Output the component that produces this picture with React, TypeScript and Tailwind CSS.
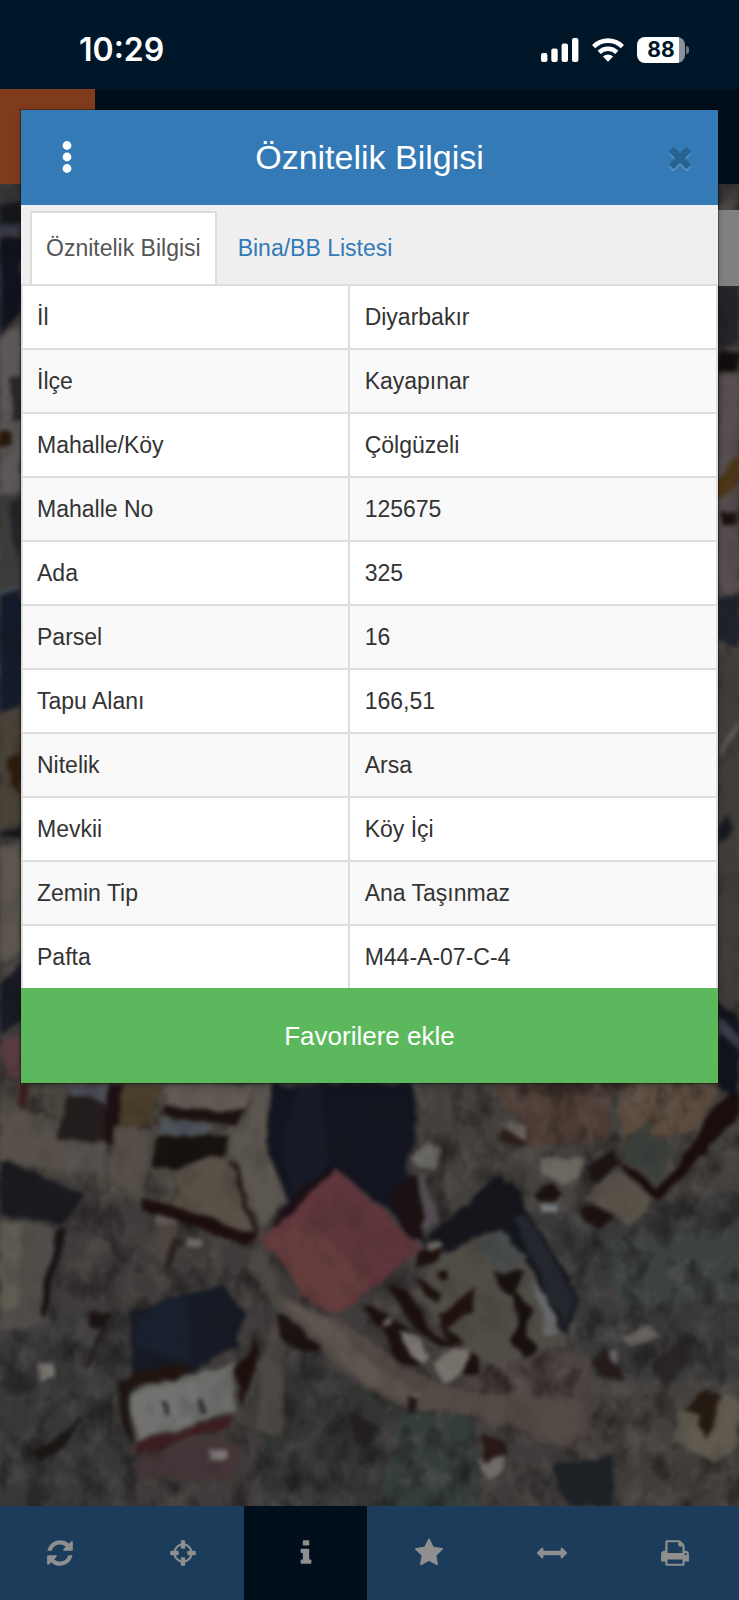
import React from "react";

const ICONS = {
  refresh:
    "M1639 1056q0 5-1 7-64 268-268 434.5t-478 166.5q-146 0-282.5-55t-243.5-157l-129 129q-19 19-45 19t-45-19-19-45v-448q0-26 19-45t45-19h448q26 0 45 19t19 45-19 45l-137 137q71 66 161 102t187 36q134 0 250-65t186-179q11-17 53-117 8-23 30-23h192q13 0 22.5 9.5t9.5 22.5zm25-800v448q0 26-19 45t-45 19h-448q-26 0-45-19t-19-45 19-45l138-138q-148-137-349-137-134 0-250 65t-186 179q-11 17-53 117-8 23-30 23h-199q-13 0-22.5-9.5t-9.5-22.5v-7q65-268 270-434.5t480-166.5q146 0 284 55.5t245 156.5l130-129q19-19 45-19t45 19 19 45z",
  crosshairs:
    "M1325 1024h-109q-26 0-45-19t-19-45v-128q0-26 19-45t45-19h109q-32-108-112.5-188.5t-188.5-112.5v109q0 26-19 45t-45 19h-128q-26 0-45-19t-19-45v-109q-108 32-188.5 112.5t-112.5 188.5h109q26 0 45 19t19 45v128q0 26-19 45t-45 19h-109q32 108 112.5 188.5t188.5 112.5v-109q0-26 19-45t45-19h128q26 0 45 19t19 45v109q108-32 188.5-112.5t112.5-188.5zm339-192v128q0 26-19 45t-45 19h-143q-37 161-154.5 278.5t-278.5 154.5v143q0 26-19 45t-45 19h-128q-26 0-45-19t-19-45v-143q-161-37-278.5-154.5t-154.5-278.5h-143q-26 0-45-19t-19-45v-128q0-26 19-45t45-19h143q37-161 154.5-278.5t278.5-154.5v-143q0-26 19-45t45-19h128q26 0 45 19t19 45v143q161 37 278.5 154.5t154.5 278.5h143q26 0 45 19t19 45z",
  info: "M1216 1344v128q0 26-19 45t-45 19h-512q-26 0-45-19t-19-45v-128q0-26 19-45t45-19h64v-384h-64q-26 0-45-19t-19-45v-128q0-26 19-45t45-19h384q26 0 45 19t19 45v576h64q26 0 45 19t19 45zm-128-1152v192q0 26-19 45t-45 19h-256q-26 0-45-19t-19-45v-192q0-26 19-45t45-19h256q26 0 45 19t19 45z",
  star: "M1728 647q0 22-26 48l-363 354 86 500q1 7 1 20 0 21-10.5 35.5t-30.5 14.5q-19 0-40-12l-449-236-449 236q-22 12-40 12-21 0-31.5-14.5t-10.5-35.5q0-6 2-20l86-500-364-354q-25-27-25-48 0-37 56-46l502-73 225-455q19-41 49-41t49 41l225 455 502 73q56 9 56 46z",
  measure:
    "M1792 896q0 26-19 45l-256 256q-19 19-45 19t-45-19-19-45v-128h-1024v128q0 26-19 45t-45 19-45-19l-256-256q-19-19-19-45t19-45l256-256q19-19 45-19t45 19 19 45v128h1024v-128q0-26 19-45t45-19 45 19l256 256q19 19 19 45z",
  print:
    "M448 1536h896v-256h-896v256zm0-640h896v-384h-160q-40 0-68-28t-28-68v-160h-640v640zm1152 64q0-26-19-45t-45-19-45 19-19 45 19 45 45 19 45-19 19-45zm128 0v416q0 13-9.5 22.5t-22.5 9.5h-224v160q0 40-28 68t-68 28h-960q-40 0-68-28t-28-68v-160h-224q-13 0-22.5-9.5t-9.5-22.5v-416q0-79 56.5-135.5t135.5-56.5h64v-544q0-40 28-68t68-28h672q40 0 88 20t76 48l152 152q28 28 48 76t20 88v256h64q79 0 135.5 56.5t56.5 135.5z",
  times:
    "M1490 1322q0 40-28 68l-136 136q-28 28-68 28t-68-28l-294-294-294 294q-28 28-68 28t-68-28l-136-136q-28-28-28-68t28-68l294-294-294-294q-28-28-28-68t28-68l136-136q28-28 68-28t68 28l294 294 294-294q28-28 68-28t68 28l136 136q28 28 28 68t-28 68l-294 294 294 294q28 28 28 68z",
};

type IconName = keyof typeof ICONS;

function Icon({ name, className }: { name: IconName; className: string }) {
  return (
    <svg viewBox="0 0 1792 1792" className={className} fill="currentColor" aria-hidden="true">
      <path d={ICONS[name]} />
    </svg>
  );
}

const ROWS: [string, string][] = [
  ["İl", "Diyarbakır"],
  ["İlçe", "Kayapınar"],
  ["Mahalle/Köy", "Çölgüzeli"],
  ["Mahalle No", "125675"],
  ["Ada", "325"],
  ["Parsel", "16"],
  ["Tapu Alanı", "166,51"],
  ["Nitelik", "Arsa"],
  ["Mevkii", "Köy İçi"],
  ["Zemin Tip", "Ana Taşınmaz"],
  ["Pafta", "M44-A-07-C-4"],
];

const TOOLS: { icon: IconName; label: string; active?: boolean }[] = [
  { icon: "refresh", label: "Yenile" },
  { icon: "crosshairs", label: "Konum" },
  { icon: "info", label: "Bilgi", active: true },
  { icon: "star", label: "Favoriler" },
  { icon: "measure", label: "Ölçüm" },
  { icon: "print", label: "Yazdır" },
];

/* Ground patches: [fill, polygon points] */
const GROUND: [string, string][] = [
  ["#4a453f", "0,0 580,0 560,480 300,360 0,240"],
  ["#43403d", "870,0 1568,0 1568,1290 1250,1290 1200,700 900,450"],
  ["#393939", "1130,400 1568,330 1568,900 1260,900"],
  ["#383738", "0,700 280,700 280,1290 0,1290"],
  ["#323432", "640,820 860,980 1010,1010 1020,1290 560,1290 560,1000"],
  ["#343d39", "850,1000 1000,1000 1020,1290 800,1290"],
  ["#403d39", "1300,1130 1568,1130 1568,1290 1300,1290"],
  ["#4b4241", "1000,780 1250,820 1240,1120 980,1000"],
  ["#4c3c34", "1040,0 1310,0 1290,180 1130,200"],
  ["#5a4a3d", "1310,0 1530,0 1480,150 1320,190"],
  ["#3c4240", "1290,480 1568,440 1568,640 1310,680"],
];

const SHAPES: [string, string][] = [
  // north-west roofs
  ["#57514a", "0,90 90,95 150,180 140,270 0,240"],
  ["#4b3f2c", "258,10 345,10 320,130 250,135"],
  ["#241d1d", "150,30 235,50 240,180 120,180"],
  ["#4d4e58", "140,10 235,10 235,70 160,40"],
  ["#1b1112", "232,10 258,10 250,190 225,185"],
  ["#3a1e1c", "40,10 64,10 52,85 38,70"],
  ["#625b54", "350,10 545,10 515,95 350,70"],
  ["#1b1111", "350,72 520,92 500,135 345,105"],
  ["#50545d", "345,115 450,130 440,170 335,165"],
  ["#17110f", "335,170 480,165 484,220 440,262 318,255"],
  ["#565350", "150,185 222,188 218,285 140,280"],
  ["#554f47", "245,135 320,145 300,320 228,300"],
  ["#585147", "380,265 445,225 485,240 535,460 370,370"],
  ["#5b564f", "545,10 585,10 570,180 615,340 560,440 510,300 485,150 520,140"],
  ["#1a1b1f", "0,240 100,290 180,340 135,430 0,400"],
  ["#1c0e0d", "300,358 370,370 545,465 520,495 400,430 300,388"],
  ["#2a1c16", "490,240 500,240 550,460 536,462"],
  ["#514d49", "0,415 135,440 80,740 0,745"],
  ["#5f5b51", "0,420 45,430 40,670 0,700"],
  ["#171315", "122,440 142,440 95,700 82,700"],
  ["#4c4540", "320,430 380,430 370,560 310,520"],
  ["#6c6861", "395,472 432,478 425,500 395,498"],
  ["#27211f", "375,470 390,480 360,560 352,550"],
  ["#605b58", "325,405 378,425 370,440 330,425"],
  // large shadow beside the red roof
  ["#121520", "580,10 870,10 885,120 860,260 880,330 905,490 720,270 610,350 560,180"],
  ["#181b27", "600,180 640,10 680,10 700,240 620,350"],
  ["#1a1015", "700,260 720,262 640,390 575,440 620,340"],
  ["#1b1014", "820,350 870,290 905,470 870,480"],
  ["#62383c", "716,262 890,500 718,705 552,478"],
  ["#5e363b", "716,262 890,500 800,620 640,400"],
  ["#653d3d", "570,480 640,410 780,600 718,700 640,650"],
  // pale path
  ["#4d4843", "545,480 600,640 600,1060 545,1040 555,820 590,700 530,560"],
  ["#544b45", "600,640 720,720 790,780 860,870 980,930 1240,960 1210,1100 1000,1000 860,980 740,880 660,780 600,700"],
  ["#5f564f", "600,660 660,680 720,740 780,840 900,940 860,960 760,890 690,780"],
  // enclosure to the east
  ["#14161c", "905,470 1060,285 1110,360 1230,660 1200,760 1060,440 950,530"],
  ["#504d46", "930,530 1060,440 1140,600 1200,790 1100,830 1010,850 880,640"],
  ["#494d4d", "1010,500 1060,440 1120,530 1060,580"],
  ["#24272e", "1085,400 1120,400 1220,660 1200,740 1150,600"],
  ["#66686a", "1130,590 1160,640 1190,760 1160,770"],
  ["#18100e", "1048,575 1110,575 1095,630 1130,690 1115,760 1140,800 1110,835 1085,790 1100,710 1085,650 1055,620"],
  ["#1d110e", "885,510 935,495 930,540 885,560"],
  ["#1d120f", "880,590 905,600 935,640 930,665 900,640"],
  ["#1b100e", "825,620 860,620 920,760 1015,830 1020,880 990,880 970,800 930,800 880,740"],
  ["#1b100e", "768,665 790,675 860,740 910,830 890,860 840,840 820,770"],
  ["#1f120f", "930,700 1005,620 1000,690 950,740 990,790 950,790"],
  ["#7a7572", "845,755 890,770 912,830 895,858 870,810"],
  ["#77726c", "920,850 960,805 1000,815 985,870 940,905"],
  ["#1c100e", "925,575 945,570 950,595 935,600"],
  ["#6f6a66", "905,480 935,482 935,500 905,505"],
  ["#6a6560", "815,725 830,710 830,735 812,745"],
  // scattered structures
  ["#6b6a66", "875,225 915,180 940,210 920,270 885,265"],
  ["#534e54", "880,290 900,280 930,420 900,450"],
  ["#1b1112", "865,280 885,290 900,420 880,440"],
  ["#6b685f", "1145,235 1240,230 1230,290 1190,315 1150,275"],
  ["#69635f", "1070,130 1115,130 1115,175 1075,160"],
  ["#2d1f18", "1065,150 1120,180 1100,200 1060,180"],
  ["#1c1412", "1245,260 1300,205 1310,240 1275,305 1245,300"],
  ["#575148", "1235,345 1310,265 1385,350 1380,400 1330,430"],
  ["#1a0d0c", "1290,215 1395,320 1440,250 1510,90 1568,10 1568,100 1400,360 1370,330"],
  ["#3c403c", "1320,180 1370,130 1425,220 1395,310 1330,240"],
  ["#1c1110", "1235,385 1260,370 1300,410 1275,450 1240,430"],
  ["#777a80", "1145,370 1185,365 1185,400 1150,395"],
  ["#1b1213", "1130,345 1170,310 1190,350 1150,365"],
  // dark roof and pale shed to the south-west
  ["#161a24", "278,690 470,610 520,700 500,800 400,880 280,870"],
  ["#1a212f", "290,700 400,640 410,840 290,810"],
  ["#20140f", "278,870 400,850 400,885 278,920"],
  ["#6c6d6a", "275,935 400,890 500,845 495,990 290,1080"],
  ["#737270", "285,945 410,900 412,1020 295,1070"],
  ["#3e1f21", "290,1085 490,1005 490,1035 295,1120"],
  ["#443638", "295,1125 440,1065 520,1090 500,1200 290,1190"],
  ["#1d0f0c", "505,860 545,760 540,880 510,980"],
  ["#1d1613", "250,900 278,880 280,1100 255,1010"],
  ["#7d7978", "440,1108 480,1106 478,1138 440,1138"],
  ["#27252a", "343,960 352,960 360,1002 350,1002"],
  ["#26252b", "420,950 432,955 437,995 427,995"],
  ["#7b7772", "78,850 112,840 115,885 85,900"],
  ["#1c1413", "185,700 235,700 215,740 185,735"],
  ["#1a1714", "60,1110 150,1050 180,990 150,1080 90,1140"],
  ["#221c1d", "225,720 235,725 185,860 175,860"],
  ["#1b1312", "585,700 610,710 680,800 660,820 600,780"],
  ["#24201f", "740,990 800,1040 780,1100 745,1080"],
  ["#1d1413", "865,945 885,950 885,990 872,998"],
  ["#746e69", "1010,1130 1030,1145 1075,1120 1060,1170 1035,1195"],
  ["#271915", "1020,1060 1070,1080 1075,1120 1030,1140"],
  ["#1e2125", "1170,1150 1300,1130 1300,1280 1200,1270"],
  ["#67625e", "1320,770 1380,725 1400,770 1340,800"],
  ["#6b6768", "1280,820 1310,800 1310,860 1285,855"],
  ["#261c1c", "1250,850 1285,790 1330,900 1270,890"],
  ["#2a2628", "1380,850 1450,760 1460,840 1410,920"],
  ["#605a50", "1440,1000 1530,930 1568,960 1568,1080 1520,1145 1430,1080"],
  ["#261b13", "1450,990 1500,920 1530,940 1500,1080 1480,1010"],
];

const SIDE: [string, string][] = [
  ["#343336", "0,184 22,184 22,205 0,210"],
  ["#15171b", "0,208 22,200 22,224 0,224"],
  ["#353a48", "0,225 22,223 22,233 0,236"],
  ["#10121d", "0,238 22,238 22,310 0,340"],
  ["#151e2d", "0,260 4,260 4,330 0,335"],
  ["#5d5858", "0,340 22,330 22,490 0,500"],
  ["#2b2728", "12,375 22,375 22,420 14,420"],
  ["#2a190c", "0,430 12,432 12,444 0,446"],
  ["#3d3c3b", "0,494 22,490 22,590 0,590"],
  ["#25262b", "10,500 22,495 22,560 12,540"],
  ["#141b2a", "0,595 22,588 22,705 0,715"],
  ["#464f5b", "0,590 22,585 22,589 0,594"],
  ["#494238", "0,715 22,705 22,820 0,830"],
  ["#2c1c0d", "9,760 22,750 22,795 9,785"],
  ["#16151a", "0,830 22,828 22,838 0,835"],
  ["#5c564f", "0,845 22,840 22,950 0,960"],
  ["#181a24", "0,985 22,960 22,1020 0,1035"],
  ["#583b40", "2,1040 22,1032 22,1080 8,1075"],
  ["#242327", "717,286 739,286 739,340 717,350"],
  ["#130c0c", "717,350 739,350 739,370 717,372"],
  ["#574f50", "717,375 739,370 739,600 717,590"],
  ["#4d3816", "717,480 739,455 739,480 717,500"],
  ["#1d0f10", "720,510 737,510 737,522 722,524"],
  ["#1e222b", "717,600 739,590 739,650 717,640"],
  ["#423d3a", "717,650 739,660 739,1000 717,1000"],
  ["#61605b", "717,750 739,720 739,728 717,758"],
  ["#181a22", "717,830 727,815 735,830 717,845"],
  ["#11131d", "717,1000 739,1020 739,1100 717,1084"],
  ["#3a3f4c", "717,1015 739,1035 739,1048 717,1028"],
];

function SatelliteMap() {
  return (
    <svg
      viewBox="0 184 739 1321"
      preserveAspectRatio="xMidYMax slice"
      className="absolute inset-0 h-full w-full"
      aria-hidden="true"
    >
      <defs>
        <filter id="soft" x="-5%" y="-5%" width="110%" height="110%" colorInterpolationFilters="sRGB">
          <feTurbulence type="fractalNoise" baseFrequency="0.05" numOctaves="2" seed="4" result="warp" />
          <feDisplacementMap in="SourceGraphic" in2="warp" scale="10" xChannelSelector="R" yChannelSelector="G" />
          <feGaussianBlur stdDeviation="2" />
        </filter>
        <filter id="mottle" x="0" y="0" width="100%" height="100%" colorInterpolationFilters="sRGB">
          <feTurbulence type="fractalNoise" baseFrequency="0.04 0.03" numOctaves="3" seed="11" />
          <feColorMatrix values="0 0 0 0 0.08  0 0 0 0 0.07  0 0 0 0 0.07  2.6 0 0 0 -1.2" />
        </filter>
        <filter id="glint" x="0" y="0" width="100%" height="100%" colorInterpolationFilters="sRGB">
          <feTurbulence type="fractalNoise" baseFrequency="0.04 0.035" numOctaves="3" seed="29" />
          <feColorMatrix values="0 0 0 0 0.46  0 0 0 0 0.43  0 0 0 0 0.42  0 2.2 0 0 -1" />
        </filter>
      </defs>
      <rect y="184" width="739" height="1321" fill="#3e3b3a" />
      <g filter="url(#soft)">
        <g transform="translate(0 1080) scale(0.4713 0.3333)">
          {GROUND.map(([fill, points], i) => (
            <polygon key={i} fill={fill} points={points} />
          ))}
        </g>
      </g>
      <rect y="184" width="739" height="1321" filter="url(#mottle)" opacity="0.5" />
      <rect y="184" width="739" height="1321" filter="url(#glint)" opacity="0.35" />
      <g filter="url(#soft)">
        <g transform="translate(0 1080) scale(0.4713 0.3333)">
          {SHAPES.map(([fill, points], i) => (
            <polygon key={i} fill={fill} points={points} />
          ))}
        </g>
        {SIDE.map(([fill, points], i) => (
          <polygon key={i} fill={fill} points={points} />
        ))}
      </g>
      <rect y="184" width="739" height="1321" filter="url(#mottle)" opacity="0.15" />
    </svg>
  );
}

function StatusBar() {
  return (
    <div className="flex h-[89px] items-center justify-between bg-[#001629] pt-[10px] pr-[50px] pl-[79px] text-white">
      <span className="font-['Inter',sans-serif] text-[32px] leading-none font-semibold">10:29</span>
      <div className="flex items-center gap-[13px]">
        <svg viewBox="0 0 38 24" className="h-6 w-[38px]" fill="currentColor" aria-label="Sinyal">
          <rect x="0" y="15" width="6.4" height="9" rx="2" />
          <rect x="10.3" y="10.5" width="6.4" height="13.5" rx="2" />
          <rect x="20.6" y="5.5" width="6.4" height="18.5" rx="2" />
          <rect x="31" y="0" width="6.4" height="24" rx="2" />
        </svg>
        <svg viewBox="0 0 32 24" className="h-6 w-8" aria-label="Wi-Fi">
          <g fill="none" stroke="#fff" strokeWidth="4.6">
            <path d="M1.6 8.6a20.4 20.4 0 0 1 28.8 0" />
            <path d="M7.2 14.4a12.5 12.5 0 0 1 17.6 0" />
          </g>
          <path d="M10.9 18.5a7.2 7.2 0 0 1 10.2 0L16 23.8z" fill="#fff" />
        </svg>
        <div className="flex items-center gap-px">
          <div className="flex h-[26px] w-12 items-center justify-center rounded-lg bg-linear-to-r from-white from-88% to-[#8b929b] to-88% font-['Inter',sans-serif] text-[21px] leading-none font-bold text-[#001629]">
            88
          </div>
          <div className="h-2 w-[3px] rounded-r-full bg-[#6d7781]" />
        </div>
      </div>
    </div>
  );
}

function AttributeDialog() {
  return (
    <section
      role="dialog"
      aria-labelledby="dialog-title"
      className="absolute inset-x-[21px] top-[110px] bg-white shadow-[0_0_0_1px_rgba(0,0,0,0.3),0_2px_6px_rgba(0,0,0,0.3)]"
    >
      <header className="flex h-[95px] items-center justify-between bg-[#337ab7] pr-[22px] pb-0.5 pl-[26px] text-white">
        <button type="button" aria-label="Menü" className="flex w-10 justify-center">
          <svg viewBox="0 0 10 32" className="h-8 w-[10px]" fill="currentColor" aria-hidden="true">
            <circle cx="5" cy="4.5" r="4.4" />
            <circle cx="5" cy="16" r="4.4" />
            <circle cx="5" cy="27.5" r="4.4" />
          </svg>
        </button>
        <h1 id="dialog-title" className="text-[34px] leading-none">
          Öznitelik Bilgisi
        </h1>
        <button type="button" aria-label="Kapat" className="flex w-11 justify-end text-[#29628f]">
          <Icon name="times" className="h-8 w-8 drop-shadow-[0_2px_0_#5c95c5]" />
        </button>
      </header>
      <div role="tablist" className="flex h-[79px] items-end bg-[#efefef] px-[9px]">
        <button
          type="button"
          role="tab"
          aria-selected="true"
          className="h-[73px] border-2 border-b-0 border-[#ddd] bg-white px-[14px] text-[#555]"
        >
          Öznitelik Bilgisi
        </button>
        <button type="button" role="tab" aria-selected="false" className="h-[71px] px-[21px] text-[#337ab7]">
          Bina/BB Listesi
        </button>
      </div>
      <table className="w-full border-separate border-spacing-0 border-r-2 border-[#ddd] text-[#333]">
        <tbody>
          {ROWS.map(([label, value]) => (
            <tr key={label} className="odd:bg-white even:bg-[#f9f9f9]">
              <th
                scope="row"
                className="h-16 w-[47%] border-t-2 border-l-2 border-[#ddd] px-[14px] text-left font-normal"
              >
                {label}
              </th>
              <td className="h-16 border-t-2 border-l-2 border-[#ddd] px-[15px]">{value}</td>
            </tr>
          ))}
        </tbody>
      </table>
      <button type="button" className="h-[95px] w-full bg-[#5cb85c] text-[26px] text-white">
        Favorilere ekle
      </button>
    </section>
  );
}

export default function App() {
  return (
    <div className="relative flex min-h-screen flex-col bg-[#000f1b] font-['Liberation_Sans',Arial,sans-serif] text-[23px] leading-none">
      <StatusBar />
      <div className="h-[95px] bg-[#000f1a]">
        <div className="h-full w-[95px] bg-[#803b1c]" />
      </div>
      <main className="relative flex-1 overflow-hidden">
        <SatelliteMap />
        <div className="absolute top-[26px] right-0 h-[76px] w-14 bg-[#808080]" />
      </main>
      <nav className="bg-[#1b3d5b]">
        <div className="mr-0.5 -ml-0.5 grid h-[94px] grid-cols-6 text-[#8f8f8f]">
          {TOOLS.map(({ icon, label, active }) => (
            <button
              key={icon}
              type="button"
              aria-label={label}
              className={
                active
                  ? "flex items-center justify-center bg-[#000f1b]"
                  : "flex items-center justify-center"
              }
            >
              <Icon name={icon} className="h-[30px] w-[30px]" />
            </button>
          ))}
        </div>
      </nav>
      <AttributeDialog />
    </div>
  );
}
